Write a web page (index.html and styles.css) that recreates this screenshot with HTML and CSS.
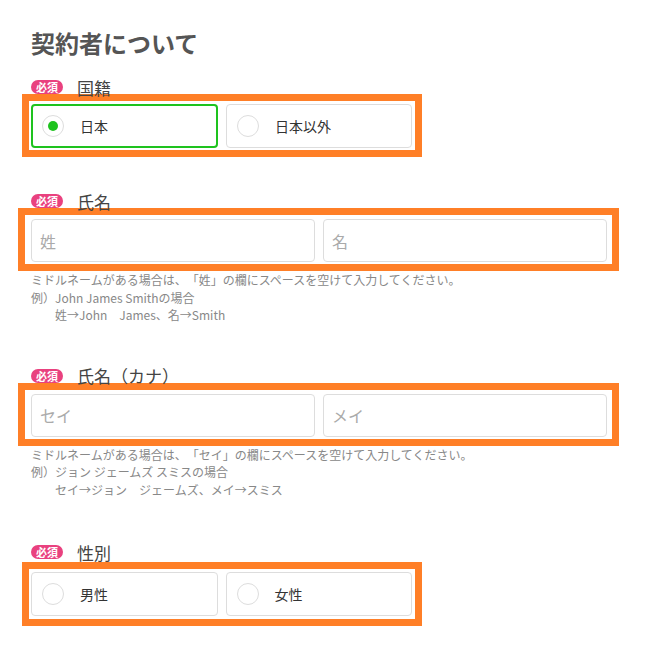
FILE: index.html
```html
<!DOCTYPE html>
<html lang="ja">
<head>
  <meta charset="UTF-8" />
  <meta name="viewport" content="width=device-width, initial-scale=1.0"/>
  <title>契約者について</title>
  <link rel="stylesheet" href="styles.css">
</head>
<body>

  <div class="form">
    <h1>契約者について</h1>

    <div class="field first">
      <div class="label"><span class="badge">必須</span>国籍</div>
      <div class="mark mark-radio">
        <div class="radios">
          <label class="radio checked"><span class="dot"></span>日本</label>
          <label class="radio"><span class="dot"></span>日本以外</label>
        </div>
      </div>
    </div>

    <div class="field second">
      <div class="label"><span class="badge">必須</span>氏名</div>
      <div class="mark mark-input">
        <div class="inputs">
          <input type="text" placeholder="姓">
          <input type="text" placeholder="名">
        </div>
      </div>
      <div class="help">
        <p>ミドルネームがある場合は、「姓」の欄にスペースを空けて入力してください。</p>
        <p>例）John James Smithの場合</p>
        <p class="indent">姓→John　James、名→Smith</p>
      </div>
    </div>

    <div class="field">
      <div class="label"><span class="badge">必須</span>氏名（カナ）</div>
      <div class="mark mark-input">
        <div class="inputs">
          <input type="text" placeholder="セイ">
          <input type="text" placeholder="メイ">
        </div>
      </div>
      <div class="help">
        <p>ミドルネームがある場合は、「セイ」の欄にスペースを空けて入力してください。</p>
        <p>例）ジョン ジェームズ スミスの場合</p>
        <p class="indent">セイ→ジョン　ジェームズ、メイ→スミス</p>
      </div>
    </div>

    <div class="field last">
      <div class="label"><span class="badge">必須</span>性別</div>
      <div class="mark mark-radio">
        <div class="radios">
          <label class="radio"><span class="dot"></span>男性</label>
          <label class="radio"><span class="dot"></span>女性</label>
        </div>
      </div>
    </div>
  </div>

</body>
</html>
```

FILE: styles.css
```css
body {
  font-family: "Noto Sans CJK JP", "Noto Sans", sans-serif;
  margin: 0;
  background-color: #fff;
  color: #333;
  text-spacing-trim: space-all;
}

.form {
  padding: 26px 0 0 31px;
}

h1 {
  font-size: 24px;
  line-height: 34px;
  font-weight: bold;
  color: #555;
  margin: 0;
}

.field {
  margin-top: 45px;
}

.field.first {
  margin-top: 20px;
}

.field.second {
  margin-top: 37px;
}

.field.last {
  margin-top: 47px;
}

.field.last .mark {
  margin-top: 3px;
  padding-bottom: 3px;
}

.label {
  display: flex;
  align-items: center;
  height: 14px;
  font-size: 17px;
  color: #444;
}

.badge {
  display: inline-block;
  width: 32px;
  height: 14px;
  line-height: 14px;
  border-radius: 8px;
  background-color: #e9417f;
  color: #fff;
  font-size: 11px;
  font-weight: bold;
  text-align: center;
  margin-right: 14px;
}

/* orange frames */
.mark {
  border: 7px solid #ff7f27;
  box-sizing: content-box;
}

.mark-radio {
  width: 381px;
  margin-left: -9px;
  padding: 3px 3px 2px 2px;
}

.mark-input {
  width: 576px;
  margin-left: -13px;
  padding: 4px 5px 2px 6px;
}

.radios {
  display: flex;
  gap: 8px;
}

.radio {
  flex: 1;
  display: flex;
  align-items: center;
  height: 44px;
  box-sizing: border-box;
  border: 1px solid #ddd;
  border-radius: 4px;
  padding-left: 10px;
  font-size: 14px;
  color: #333;
}

.radio.checked {
  border: 2px solid #1ec31e;
  padding-left: 9px;
}

.dot {
  width: 22px;
  height: 22px;
  box-sizing: border-box;
  border: 1px solid #ddd;
  border-radius: 50%;
  margin-right: 16px;
  display: flex;
  align-items: center;
  justify-content: center;
}

.checked .dot::after {
  content: "";
  width: 10px;
  height: 10px;
  border-radius: 50%;
  background-color: #1ec31e;
}

.inputs {
  display: flex;
  gap: 8px;
}

input {
  flex: 1;
  min-width: 0;
  height: 43px;
  box-sizing: border-box;
  border: 1px solid #ddd;
  border-radius: 4px;
  padding: 0 8px;
  font-family: inherit;
  font-size: 16px;
  color: #333;
}

input::placeholder {
  color: #aaa;
}

.help {
  font-size: 12px;
  line-height: 17.5px;
  color: #888;
}

.help p {
  margin: 0;
}

.help .indent {
  padding-left: 24px;
}
```
